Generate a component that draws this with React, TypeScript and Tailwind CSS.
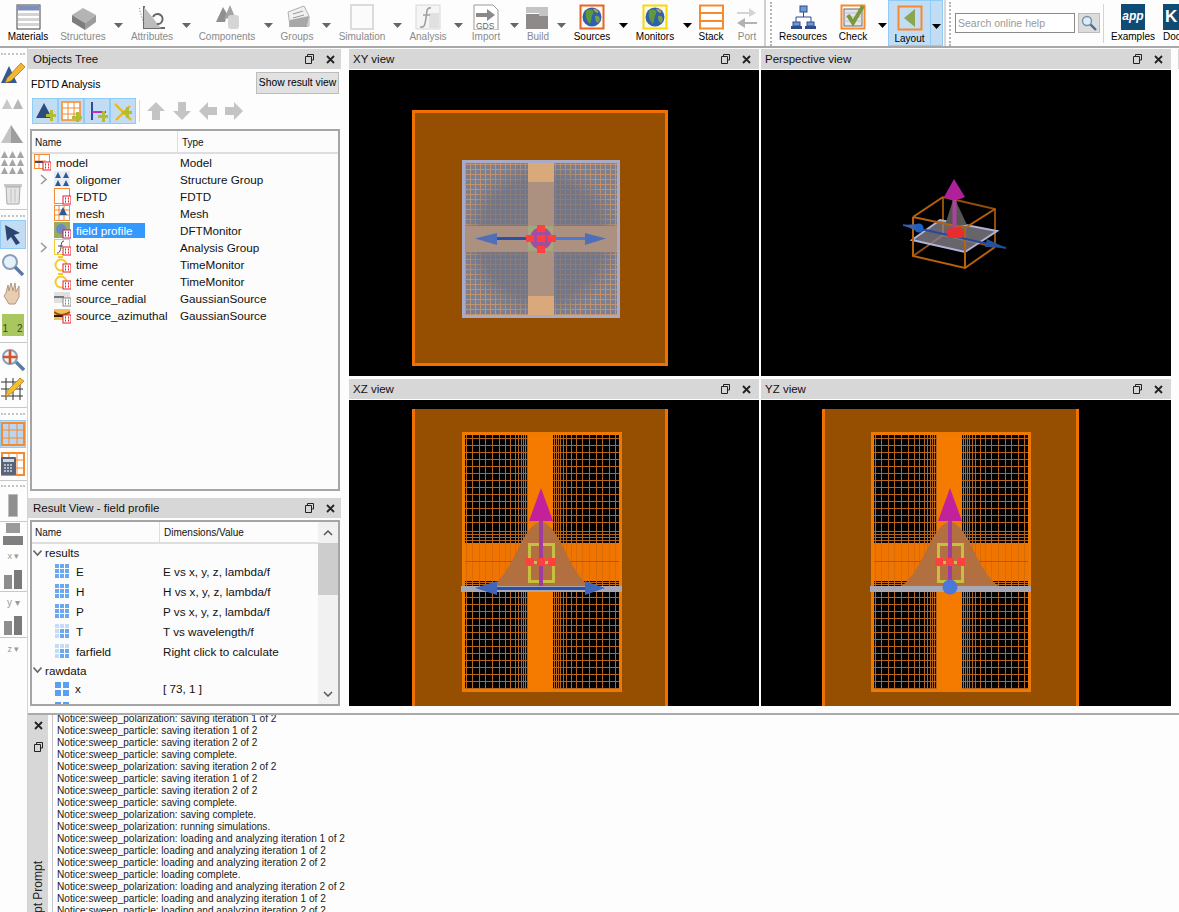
import React from "react";

function Ic({ children, w = 26, h = 26, vb }: { children: React.ReactNode; w?: number; h?: number; vb?: string }) {
  return (
    <svg width={w} height={h} viewBox={vb ?? `0 0 ${w} ${h}`} className="block shrink-0" shapeRendering="auto">
      {children}
    </svg>
  );
}

const Materials = () => (
  <Ic>
    <rect x="2" y="1" width="23" height="24" fill="#fff" stroke="#444" />
    <rect x="2.5" y="1.5" width="22" height="5" fill="#7e8fc0" />
    {[9, 14, 19].map((y) => (
      <rect key={y} x="3" y={y} width="21" height="3" fill="#d4d4d4" />
    ))}
  </Ic>
);
const Structures = () => (
  <Ic>
    <path d="M2 11 L13 4 L26 11 L15 19 Z" fill="#b4b4b4" />
    <path d="M2 11 L15 19 V26 L2 18 Z" fill="#7d7d7d" />
    <path d="M15 19 L26 11 V18 L15 26 Z" fill="#9c9c9c" />
  </Ic>
);
const Attributes = () => (
  <Ic>
    <path d="M5 2 V24 H26" stroke="#6b6b6b" strokeWidth="2" fill="none" />
    <path d="M5 3 L22 24 H5 Z" fill="#bdbdbd" />
    <path d="M0 4 L5 20" stroke="#666" strokeDasharray="1 2" />
    <path d="M14 13 a5 5 0 1 1 4 7" stroke="#666" strokeWidth="2" fill="none" />
  </Ic>
);
const Components = () => (
  <Ic>
    <path d="M2 18 L9 3 L13 10 L11 18 Z" fill="#8f8f8f" />
    <path d="M10 15 L16 1 L21 13 Z" fill="#a3a3a3" />
    <rect x="14" y="11" width="11" height="14" rx="3" fill="#d5d5d5" />
  </Ic>
);
const Groups = () => (
  <Ic>
    <path d="M4 8 L20 2 L25 12 V22 H6 Z" fill="#f0f0f0" stroke="#b0b0b0" />
    <path d="M6 16 L25 12 L23 23 H5 Z" fill="#a8a8a8" />
    <path d="M9 10 L19 7 M9 14 L20 11" stroke="#999" />
  </Ic>
);
const Simulation = () => (
  <Ic>
    <rect x="2" y="1" width="22" height="24" fill="#fbfbfb" stroke="#dcdcdc" strokeWidth="2" />
  </Ic>
);
const Analysis = () => (
  <Ic>
    <rect x="1" y="1" width="24" height="24" fill="#f5f5f5" stroke="#d8d8d8" />
    <rect x="14" y="9" width="10" height="15" fill="#e0e0e0" />
    <path d="M16 4 C11 3 12 9 11 14 C10 20 10 24 5 23 M8 11 H15" stroke="#a0a0a0" strokeWidth="1.6" fill="none" />
  </Ic>
);
const ImportI = () => (
  <Ic>
    <path d="M1 1 H20 L25 6 V26 H1 Z" fill="#fff" stroke="#999" />
    <path d="M3 9 H14 V5 L22 11 L14 17 V13 H3 Z" fill="#8a8a8a" />
    <text x="3" y="25" fontSize="8.5" fill="#666" fontFamily="Liberation Sans">GDS</text>
  </Ic>
);
const Build = () => (
  <Ic>
    <rect x="1" y="3" width="22" height="6" fill="#c4c4c4" />
    <rect x="1" y="10" width="22" height="15" fill="#8f8a8a" />
    <rect x="14" y="9" width="9" height="3" fill="#c4c4c4" />
  </Ic>
);
const Earth = ({ frame }: { frame: string }) => (
  <Ic>
    <rect x="1.5" y="1.5" width="23" height="23" fill="#fbf8e8" stroke={frame} strokeWidth="2" />
    <circle cx="13" cy="13" r="9.5" fill="#2f5fae" />
    <path d="M7 7 C11 4 16 6 14 10 C12 12 13 15 11 20 C8 17 6 13 7 7 Z" fill="#5f9a3a" />
    <path d="M16 12 C20 11 22 14 20 18 C18 20 16 17 16 12 Z" fill="#76a046" />
    <path d="M14 5 C17 4 20 7 19 9 C17 9 15 7 14 5 Z" fill="#b59a55" />
  </Ic>
);
const Stack = () => (
  <Ic>
    <rect x="2" y="1.5" width="23" height="23" fill="#fff" stroke="#f58a2e" strokeWidth="2" />
    <path d="M2 9 H25 M2 17 H25" stroke="#f58a2e" strokeWidth="2" />
  </Ic>
);
const Port = () => (
  <Ic>
    <path d="M3 8 H15 V4 L22 9 L15 13 V10 H3 Z" fill="#d4d4d4" />
    <path d="M23 18 H11 V14 L3 19 L11 24 V20 H23 Z" fill="#b3b3b3" />
  </Ic>
);
const Resources = () => (
  <Ic>
    <rect x="10" y="2" width="7" height="6" fill="#6d9ad4" stroke="#2e4b8e" />
    <path d="M13.5 8 V13 M6 18 V13 H21 V18" stroke="#2e4b8e" fill="none" />
    <rect x="3" y="18" width="7" height="4" fill="#6d9ad4" stroke="#2e4b8e" />
    <rect x="17" y="18" width="7" height="4" fill="#6d9ad4" stroke="#2e4b8e" />
    <rect x="1" y="22" width="11" height="3" fill="#2e4b8e" />
    <rect x="15" y="22" width="11" height="3" fill="#2e4b8e" />
  </Ic>
);
const Check = () => (
  <Ic>
    <rect x="1.5" y="1.5" width="23" height="23" fill="#fff" stroke="#f58a2e" strokeWidth="2" />
    <rect x="4" y="5" width="18" height="17" fill="#e4e4ee" stroke="#666" />
    <path d="M4 9 H22 M4 13 H22 M4 17 H22" stroke="#c0c0c8" />
    <path d="M8 11 L13 19 L23 2" stroke="#7a9a3a" strokeWidth="4" fill="none" />
  </Ic>
);
const Layout = () => (
  <Ic>
    <rect x="1.5" y="1.5" width="23" height="23" fill="#c2dcf3" stroke="#f58a2e" strokeWidth="2" />
    <path d="M18 4 V22 L7 13 Z" fill="#8aa650" />
  </Ic>
);

type Tool = { label: string; icon: React.ReactNode; on?: boolean; w: string; arrow?: string };
const tools: Tool[] = [
  { label: "Materials", icon: <Materials />, on: true, w: "w-[56px]" },
  { label: "Structures", icon: <Structures />, w: "w-[54px]", arrow: "w-[16px]" },
  { label: "Attributes", icon: <Attributes />, w: "w-[52px]", arrow: "w-[16px]" },
  { label: "Components", icon: <Components />, w: "w-[66px]", arrow: "w-[16px]" },
  { label: "Groups", icon: <Groups />, w: "w-[42px]", arrow: "w-[16px]" },
  { label: "Simulation", icon: <Simulation />, w: "w-[56px]", arrow: "w-[14px]" },
  { label: "Analysis", icon: <Analysis />, w: "w-[48px]", arrow: "w-[12px]" },
  { label: "Import", icon: <ImportI />, w: "w-[44px]", arrow: "w-[12px]" },
  { label: "Build", icon: <Build />, w: "w-[36px]", arrow: "w-[10px]" },
  { label: "Sources", icon: <Earth frame="#e8622a" />, on: true, w: "w-[52px]", arrow: "w-[10px]" },
  { label: "Monitors", icon: <Earth frame="#f5d90a" />, on: true, w: "w-[54px]", arrow: "w-[10px]" },
  { label: "Stack", icon: <Stack />, on: true, w: "w-[38px]" },
  { label: "Port", icon: <Port />, w: "w-[34px]" },
];

const Arrow = ({ on }: { on?: boolean }) => (
  <svg width="9" height="5" viewBox="0 0 9 5" className="block">
    <path d="M0 0 H9 L4.5 5 Z" fill={on ? "#000" : "#666"} />
  </svg>
);

function ToolBtn({ t }: { t: Tool }) {
  return (
    <>
      <div className={`${t.w} shrink-0 flex flex-col items-center pt-[4px]`}>
        {t.icon}
        <span className={`mt-[1px] text-[10px] leading-[12px] whitespace-nowrap ${t.on ? "text-black" : "text-[#8a8a8a]"}`}>{t.label}</span>
      </div>
      {t.arrow && (
        <div className={`${t.arrow} shrink-0 flex justify-center pt-[23px]`}>
          <Arrow on={t.on} />
        </div>
      )}
    </>
  );
}

const Dots = ({ v }: { v?: boolean }) =>
  v ? (
    <div className="w-0 h-[44px] border-l-2 border-dotted border-[#b5b5b5] mt-[2px] shrink-0" />
  ) : (
    <div className="w-[24px] h-0 border-t-2 border-dotted border-[#c4c4c4] ml-[1px] shrink-0" />
  );

function Toolbar() {
  return (
    <div className="h-[48px] shrink-0 flex bg-[#fdfdfd] border-b-2 border-[#a8a8a8] overflow-hidden">
      {tools.map((t) => (
        <ToolBtn key={t.label} t={t} />
      ))}
      <div className="w-[2px] h-[46px] bg-[#d0d0d0] shrink-0" />
      <div className="ml-[4px] mr-[4px] flex"><Dots v /></div>
      <ToolBtn t={{ label: "Resources", icon: <Resources />, on: true, w: "w-[54px]" }} />
      <ToolBtn t={{ label: "Check", icon: <Check />, on: true, w: "w-[46px]", arrow: "w-[12px]" }} />
      <div className="flex h-[46px] w-[55px] shrink-0 bg-[#c2dcf3] border border-[#8fcdf7]">
        <div className="w-[42px] flex flex-col items-center pt-[4px] border-r border-[#8fcdf7]">
          <Layout />
          <span className="mt-[2px] text-[10px] leading-[12px] text-black">Layout</span>
        </div>
        <div className="flex-1 flex justify-center pt-[23px]"><Arrow on /></div>
      </div>
      <div className="w-[2px] h-[46px] bg-[#d8d8d8] ml-[1px] shrink-0" />
      <div className="ml-[3px] flex"><Dots v /></div>
      <div className="ml-[4px] mt-[13px] w-[120px] h-[20px] border border-[#8a8a8a] bg-white text-[10.5px] leading-[18px] pl-[2px] text-[#9a9a9a] shrink-0">Search online help</div>
      <div className="ml-[3px] mt-[13px] w-[22px] h-[20px] bg-[#dcdcdc] border border-[#bdbdbd] flex items-center justify-center shrink-0">
        <svg width="16" height="16" viewBox="0 0 16 16">
          <circle cx="6" cy="6" r="4.5" fill="#dcecf8" stroke="#7890a8" strokeWidth="1.4" />
          <path d="M9.5 9.5 L15 15" stroke="#4a6a9a" strokeWidth="2.4" />
        </svg>
      </div>
      <div className="ml-[3px] mt-[4px] w-[1px] h-[39px] bg-[#d4d4d4] shrink-0" />
      <div className="w-[58px] shrink-0 flex flex-col items-center pt-[4px]">
        <div className="w-[24px] h-[26px] bg-[#0f4c75] text-white italic font-bold text-[12px] leading-[24px] text-center">app</div>
        <span className="mt-[1px] text-[10px] leading-[12px] text-black">Examples</span>
      </div>
      <div className="shrink-0 flex flex-col items-start pt-[4px] pl-[1px]">
        <div className="w-[24px] h-[26px] bg-[#0f4c75] text-white font-bold text-[17px] leading-[26px] pl-[2px]">K</div>
        <span className="mt-[1px] text-[10px] leading-[12px] text-black">Doc</span>
      </div>
    </div>
  );
}

/* ---------- left tool column ---------- */
const Sep = () => <div className="h-[1px] w-[27px] bg-[#c8c8c8] shrink-0" />;
const Box = ({ h, sel, children }: { h: string; sel?: boolean; children: React.ReactNode }) => (
  <div className={`${h} shrink-0 flex items-center justify-center ${sel ? "w-[26px] bg-[#c2dcf3] border border-[#8fcdf7]" : "w-[25px]"}`}>{children}</div>
);
const Tri = ({ x, y, s, f }: { x: number; y: number; s: number; f: string }) => <path d={`M${x} ${y + s} L${x + s / 2} ${y} L${x + s} ${y + s} Z`} fill={f} />;
const Sp = ({ h }: { h: string }) => <div className={`${h} shrink-0`} />;

function LeftTools() {
  return (
    <div className="w-[28px] shrink-0 flex flex-col items-start overflow-hidden pt-[5px] bg-[#fdfdfd] border-r border-[#d4d4d4]">
      <Dots />
      <Sp h="h-[3px]" />
      <Box h="h-[28px]">
        <Ic w={24} h={24}>
          <path d="M0 23 L8 6 L16 23 Z" fill="#2e5a96" />
          <path d="M6 18 L20 3 L24 7 L10 21 L4 23 Z" fill="#f2b632" stroke="#a06a10" strokeWidth="0.7" />
        </Ic>
      </Box>
      <Sp h="h-[5px]" />
      <Box h="h-[24px]">
        <Ic w={22} h={12}><Tri x={0} y={2} s={10} f="#c8c8c8" /><Tri x={11} y={2} s={10} f="#b8b8b8" /></Ic>
      </Box>
      <Sp h="h-[4px]" />
      <Box h="h-[28px]">
        <Ic w={24} h={22}><path d="M0 21 L10 3 L16 14 L22 21 Z" fill="#c4c4c4" /><path d="M10 3 L22 21 H10 Z" fill="#9e9e9e" /></Ic>
      </Box>
      <Box h="h-[32px]">
        <Ic w={24} h={24}>
          {[0, 8, 16].flatMap((y) => [0, 8, 16].map((x) => <Tri key={`${x}${y}`} x={x} y={y} s={7} f="#a5a5a5" />))}
        </Ic>
      </Box>
      <Sp h="h-[1px]" />
      <Box h="h-[26px]">
        <Ic w={20} h={24}>
          <rect x="1" y="3" width="18" height="3" fill="#c8c8c8" />
          <path d="M3 6 H17 L16 23 H4 Z" fill="#e4e4e4" stroke="#aaa" />
          <path d="M8 8 V21 M12 8 V21" stroke="#c0c0c0" />
        </Ic>
      </Box>
      <Sp h="h-[3px]" />
      <Sep />
      <Sp h="h-[5px]" />
      <Dots />
      <Sp h="h-[3px]" />
      <Box h="h-[29px]" sel>
        <Ic w={20} h={22}><path d="M2 1 L17 9 L11 11 L17 19 L13 21 L8 13 L4 17 Z" fill="#2c4470" /></Ic>
      </Box>
      <Sp h="h-[1px]" />
      <Box h="h-[29px]">
        <Ic w={24} h={24}>
          <circle cx="9" cy="9" r="7" fill="#e4f0fa" stroke="#8aa0b8" strokeWidth="2" />
          <path d="M14 14 L22 22" stroke="#5a7aa0" strokeWidth="3.4" />
        </Ic>
      </Box>
      <Box h="h-[28px]">
        <Ic w={20} h={24}>
          <path d="M3 12 L5 4 L6 10 L8 2 L10 10 L12 2 L13 11 L16 5 L16 16 L12 23 H6 L1 15 Z" fill="#e8cdb0" stroke="#b09880" />
        </Ic>
      </Box>
      <Sp h="h-[1px]" />
      <Box h="h-[34px]">
        <div className="w-[22px] h-[22px] bg-[#a9c75e] text-[#2f4a2a] text-[10px] leading-[12px] pt-[9px] flex justify-between px-[1px]">
          <span>1</span><span>2</span>
        </div>
      </Box>
      <Sep />
      <Box h="h-[33px]">
        <Ic w={24} h={24}>
          <circle cx="9" cy="9" r="7" fill="#eef2f6" stroke="#8aa0b8" strokeWidth="2" />
          <path d="M15 14 L23 22" stroke="#5a7aa0" strokeWidth="3.4" />
          <path d="M9 2 V16 M2 9 H16" stroke="#d2552a" strokeWidth="2.6" />
        </Ic>
      </Box>
      <Box h="h-[24px]">
        <Ic w={24} h={24}>
          <path d="M0 6 H22 M0 13 H22 M0 20 H22 M5 2 V24 M12 2 V24 M19 2 V24" stroke="#333" />
          <path d="M4 21 L7 14 L19 2 L23 5 L11 17 Z" fill="#f2bd2e" stroke="#a07010" strokeWidth="0.6" />
        </Ic>
      </Box>
      <Sp h="h-[7px]" />
      <Sep />
      <Sp h="h-[5px]" />
      <Dots />
      <Sp h="h-[5px]" />
      <Box h="h-[28px]" sel>
        <Ic w={24} h={24}>
          <rect x="1" y="1" width="22" height="22" fill="#bcd6ef" stroke="#f58a2e" strokeWidth="2" />
          <path d="M8 1 V23 M16 1 V23 M1 8 H23 M1 16 H23" stroke="#f58a2e" />
        </Ic>
      </Box>
      <Sp h="h-[2px]" />
      <Box h="h-[27px]">
        <Ic w={24} h={24}>
          <rect x="1" y="1" width="22" height="22" fill="#fff" stroke="#f58a2e" strokeWidth="2" />
          <path d="M8 1 V23 M16 1 V23 M1 8 H23 M1 16 H23" stroke="#f58a2e" />
          <rect x="0" y="5" width="15" height="18" rx="1" fill="#5a6478" />
          <rect x="2" y="7" width="11" height="3" fill="#d0d8e4" />
          <path d="M3 13 H12 M3 16 H12 M3 19 H12" stroke="#d0d8e4" strokeWidth="1.6" strokeDasharray="2 1" />
        </Ic>
      </Box>
      <Sp h="h-[3px]" />
      <Sep />
      <Sp h="h-[4px]" />
      <Dots />
      <Sp h="h-[6px]" />
      <Box h="h-[24px]"><div className="w-[10px] h-[23px] bg-[#8f8f8f] border border-[#bdbdbd]" /></Box>
      <Sp h="h-[4px]" />
      <Sep />
      <Box h="h-[24px]">
        <div className="flex flex-col gap-[3px] w-[20px]">
          <div className="h-[10px] w-[14px] mx-auto bg-[#9a9a9a]" />
          <div className="h-[9px] w-[20px] bg-[#7f7f7f]" />
        </div>
      </Box>
      <div className="h-[20px] w-[27px] text-[9px] leading-[20px] text-[#999] text-center shrink-0">x ▾</div>
      <Sp h="h-[2px]" />
      <Box h="h-[22px]">
        <div className="flex items-end gap-[2px]"><div className="w-[8px] h-[14px] bg-[#8d8d8d]" /><div className="w-[8px] h-[19px] bg-[#7a7a7a]" /></div>
      </Box>
      <Sp h="h-[1px]" />
      <Sep />
      <div className="h-[22px] w-[27px] text-[10px] leading-[22px] text-[#999] text-center shrink-0">y ▾</div>
      <Box h="h-[23px]">
        <div className="flex items-end gap-[2px]"><div className="w-[8px] h-[14px] bg-[#8d8d8d]" /><div className="w-[8px] h-[19px] bg-[#7a7a7a]" /></div>
      </Box>
      <Sep />
      <div className="h-[22px] w-[27px] text-[9px] leading-[22px] text-[#999] text-center shrink-0">z ▾</div>
    </div>
  );
}

/* ---------- panels ---------- */
const WinBtns = () => (
  <div className="flex items-center gap-[12px] shrink-0">
    <svg width="9" height="10" viewBox="0 0 9 10">
      <path d="M2.5 2.5 V0.5 H8.5 V6 H6.5 M0.5 2.5 H6.5 V9.5 H0.5 Z" fill="none" stroke="#222" />
    </svg>
    <svg width="9" height="9" viewBox="0 0 9 9">
      <path d="M1 1 L8 8 M8 1 L1 8" stroke="#222" strokeWidth="1.8" />
    </svg>
  </div>
);
const TitleBar = ({ title, cls }: { title: string; cls?: string }) => (
  <div className={`h-[20px] shrink-0 bg-[#d7d7d7] flex items-center justify-between text-[11.5px] text-[#111] ${cls ?? ""}`}>
    <span className="pt-[2px]">{title}</span>
    <WinBtns />
  </div>
);

const Badge = ({ c = "#e0202c" }: { c?: string }) => (
  <g>
    <rect x="9" y="8" width="8" height="8" fill="#fff" stroke={c} />
    <path d="M11 10.5 H12 M14 10.5 H15 M11 13.5 H12 M14 13.5 H15" stroke={c} strokeWidth="2" />
  </g>
);
const tI = (c: React.ReactNode) => <Ic w={17} h={17}>{c}</Ic>;
const treeIcons: Record<string, React.ReactNode> = {
  model: tI(<><rect x="0.5" y="0.5" width="15" height="14" fill="#fff" stroke="#f58a2e" /><path d="M5 0 V15 M0 7 H12" stroke="#f58a2e" /><path d="M1 8 H9" stroke="#2e4b8e" strokeWidth="2" /><Badge /></>),
  oligomer: tI(<><rect width="16" height="16" fill="#e8ecf4" /><path d="M1 7 L4 1 L7 7 Z M9 7 L12 1 L15 7 Z M1 15 L4 9 L7 15 Z M9 15 L12 9 L15 15 Z" fill="#2e5a96" /></>),
  FDTD: tI(<><rect x="0.5" y="0.5" width="15" height="15" fill="#fff" stroke="#f58a2e" /><Badge /></>),
  mesh: tI(<><rect x="0.5" y="0.5" width="15" height="15" fill="#fff" stroke="#f58a2e" /><path d="M5 0 V16 M10 0 V16 M0 5 H16 M0 10 H16" stroke="#f58a2e" /><path d="M5 10 L9 2 L13 10 Z" fill="#2e5a96" /></>),
  "field profile": tI(<><rect width="16" height="16" fill="#9aaa60" /><circle cx="7" cy="7" r="5" fill="#6a8ac0" /><Badge c="#b02060" /></>),
  total: tI(<><rect x="0.5" y="0.5" width="15" height="15" fill="#fff" stroke="#f5cc30" /><path d="M10 2 C6 2 8 8 6 12 C5 14 4 14 3 14 M4 7 H9" stroke="#444" fill="none" /><Badge /></>),
  time: tI(<><circle cx="7" cy="9" r="5.5" fill="#fff" stroke="#f5c830" strokeWidth="2" /><path d="M4 1 H9" stroke="#f5c830" strokeWidth="2" /><Badge /></>),
  source_radial: tI(<><rect y="2" width="16" height="11" fill="#e0e0e0" /><path d="M0 7 H10" stroke="#777" strokeWidth="2" /><Badge c="#888" /></>),
  source_azimuthal: tI(<><rect y="2" width="16" height="11" fill="#f0c060" /><path d="M0 5 C5 9 10 9 16 5" stroke="#a05010" strokeWidth="2" fill="none" /><path d="M0 9 H9" stroke="#222" strokeWidth="2" /><Badge /></>),
};
treeIcons["time center"] = treeIcons.time;

const Chevron = ({ down, c = "#9a9a9a" }: { down?: boolean; c?: string }) => (
  <svg width="9" height="11" viewBox="0 0 9 11" className="block">
    <path d={down ? "M0.5 2.5 L4.5 7 L8.5 2.5" : "M2 1 L7 5.5 L2 10"} stroke={c} strokeWidth="1.6" fill="none" />
  </svg>
);

const rows: [string, string, boolean?][] = [
  ["oligomer", "Structure Group", true],
  ["FDTD", "FDTD"],
  ["mesh", "Mesh"],
  ["field profile", "DFTMonitor"],
  ["total", "Analysis Group", true],
  ["time", "TimeMonitor"],
  ["time center", "TimeMonitor"],
  ["source_radial", "GaussianSource"],
  ["source_azimuthal", "GaussianSource"],
];

function ObjectsTree() {
  return (
    <div className="flex flex-col h-[442px] shrink-0">
      <TitleBar title="Objects Tree" cls="pl-[5px] pr-[6px]" />
      <div className="flex items-start justify-between h-[26px] pl-[3px] pr-[2px] mt-[1px]">
        <span className="text-[10.5px] pt-[7px] text-black">FDTD Analysis</span>
        <div className="w-[83px] h-[22px] mt-[2px] bg-[#e1e1e1] border border-[#bdbdbd] text-[10.3px] leading-[20px] text-center text-black whitespace-nowrap">Show result view</div>
      </div>
      <div className="flex items-center h-[26px] pl-[4px] mt-[2px]">
        {[
          <g key="a"><path d="M2 18 L10 3 L18 18 Z" fill="#2e4b7e" /><path d="M13 9 h4 v-4 h3 v4 h3 v3 h-3 v4 h-3 v-4 h-4 Z" fill="#b4bc30" transform="translate(-1 5)" /></g>,
          <g key="b"><rect x="2" y="2" width="18" height="18" fill="#fff" stroke="#f58a2e" strokeWidth="1.5" /><path d="M8 2 V20 M14 2 V20 M2 8 H20 M2 14 H20" stroke="#f58a2e" /><path d="M13 9 h4 v-4 h3 v4 h3 v3 h-3 v4 h-3 v-4 h-4 Z" fill="#b4bc30" transform="translate(-1 7)" /></g>,
          <g key="c"><path d="M6 2 V20" stroke="#2e4b9e" strokeWidth="2" /><path d="M6 12 H20" stroke="#c030c0" strokeWidth="2" /><path d="M13 9 h4 v-4 h3 v4 h3 v3 h-3 v4 h-3 v-4 h-4 Z" fill="#b4bc30" transform="translate(-1 6)" /></g>,
          <g key="d"><path d="M3 4 L19 20 M4 20 L18 6" stroke="#e8b820" strokeWidth="2.4" /><path d="M13 9 h4 v-4 h3 v4 h3 v3 h-3 v4 h-3 v-4 h-4 Z" fill="#b4bc30" transform="translate(-3 2)" /></g>,
        ].map((ic, i) => (
          <div key={i} className="w-[26px] h-[26px] bg-[#c2dcf3] border border-[#8fcdf7] flex items-center justify-center">
            <Ic w={22} h={22}>{ic}</Ic>
          </div>
        ))}
        <div className="w-[1px] h-[22px] bg-[#d8d8d8] ml-[3px] mr-[6px]" />
        <div className="flex gap-[6px]">
          {["M10 1 L19 10 H14 V19 H6 V10 H1 Z", "M6 1 H14 V10 H19 L10 19 L1 10 H6 Z", "M1 10 L10 1 V6 H19 V14 H10 V19 Z", "M19 10 L10 1 V6 H1 V14 H10 V19 Z"].map((d) => (
            <Ic key={d} w={20} h={20}><path d={d} fill="#c4c4c4" /></Ic>
          ))}
        </div>
      </div>
      <div className="ml-[2px] mr-[1px] mt-[5px] flex-1 border-2 border-[#a5a5a5] bg-[#fcfcfc] text-[11.7px] text-[#111] overflow-hidden">
        <div className="h-[23px] flex border-b-2 border-[#dedede] text-[10px]">
          <div className="w-[146px] pl-[3px] h-full leading-[23px] border-r border-[#dedede]">Name</div>
          <div className="pl-[4px] leading-[23px]">Type</div>
        </div>
        <div className="h-[17px] flex items-center">
          <div className="w-[148px] flex items-center pl-[2px] shrink-0 gap-[5px]">{treeIcons.model}<span>model</span></div>
          <span>Model</span>
        </div>
        {rows.map(([n, t, exp]) => (
          <div key={n} className="h-[17px] flex items-center">
            <div className="w-[148px] flex items-center shrink-0 overflow-visible">
              <div className="w-[22px] pl-[7px] shrink-0">{exp && <Chevron />}</div>
              {treeIcons[n]}
              <span className={`ml-[2px] px-[3px] whitespace-nowrap ${n === "field profile" ? "bg-[#3399ff] text-white w-[72px] leading-[15px]" : ""}`}>{n}</span>
            </div>
            <span>{t}</span>
          </div>
        ))}
      </div>
    </div>
  );
}

const Dgrid = ({ c = "#6aa8f0", dim }: { c?: string; dim?: boolean }) => (
  <Ic w={15} h={15}>
    {[0, 5, 10].flatMap((y) =>
      [0, 5, 10].map((x) => <rect key={`${x}${y}`} x={x} y={y} width="4" height="4" fill={dim && (x === 0 || y === 0) ? "#c4dcf8" : c} />)
    )}
  </Ic>
);
const res: [string, string, boolean][] = [
  ["E", "E vs x, y, z, lambda/f", false],
  ["H", "H vs x, y, z, lambda/f", false],
  ["P", "P vs x, y, z, lambda/f", false],
  ["T", "T vs wavelength/f", true],
  ["farfield", "Right click to calculate", true],
];
const ResRow = ({ a, b, icon }: { a: string; b: string; icon: React.ReactNode }) => (
  <div className="h-[20px] flex items-center shrink-0">
    <div className="w-[131px] flex items-center pl-[23px] shrink-0">
      {icon}
      <span className="ml-[6px]">{a}</span>
    </div>
    <span>{b}</span>
  </div>
);
const Solid = () => (
  <Ic w={14} h={14}>
    <rect width="6" height="6" fill="#5aa0f0" /><rect x="8" width="6" height="6" fill="#5aa0f0" />
    <rect y="8" width="6" height="6" fill="#5aa0f0" /><rect x="8" y="8" width="6" height="6" fill="#5aa0f0" />
  </Ic>
);

function ResultView() {
  return (
    <div className="flex flex-col flex-1 mt-[7px] min-h-0">
      <TitleBar title="Result View - field profile" cls="pl-[5px] pr-[6px]" />
      <div className="ml-[2px] mr-[1px] mt-[2px] h-[188px] border-2 border-[#a5a5a5] bg-[#fcfcfc] flex text-[11.7px] text-[#111] overflow-hidden">
        <div className="flex-1 min-w-0 flex flex-col overflow-hidden">
          <div className="h-[22px] shrink-0 flex border-b-2 border-[#dedede] text-[10px]">
            <div className="w-[128px] pl-[3px] h-full leading-[22px] border-r border-[#dedede]">Name</div>
            <div className="pl-[4px] leading-[22px]">Dimensions/Value</div>
          </div>
          <div className="h-[18px] shrink-0 flex items-center pl-[1px] gap-[3px]"><Chevron down c="#666" /><span>results</span></div>
          {res.map(([a, b, d]) => (
            <ResRow key={a} a={a} b={b} icon={<Dgrid dim={d} />} />
          ))}
          <div className="h-[17px] shrink-0 flex items-center pl-[1px] gap-[3px]"><Chevron down c="#666" /><span>rawdata</span></div>
          <ResRow a="x" b="[ 73, 1 ]" icon={<Solid />} />
          <ResRow a="y" b="[ 73, 1 ]" icon={<Solid />} />
        </div>
        <div className="w-[20px] shrink-0 flex flex-col items-center bg-[#f1f1f1]">
          <div className="h-[21px] flex items-center justify-center">
            <svg width="10" height="6" viewBox="0 0 10 6"><path d="M1 5 L5 1 L9 5" stroke="#555" strokeWidth="1.5" fill="none" /></svg>
          </div>
          <div className="w-full h-[52px] bg-[#cdcdcd]" />
          <div className="flex-1" />
          <div className="h-[21px] flex items-center justify-center">
            <svg width="10" height="6" viewBox="0 0 10 6"><path d="M1 1 L5 5 L9 1" stroke="#555" strokeWidth="1.5" fill="none" /></svg>
          </div>
        </div>
      </div>
    </div>
  );
}

/* ---------- 3D views ---------- */
function meshOffsets(len: number) {
  const out: number[] = [];
  let p = 1;
  let step = 1.6;
  while (p < len) {
    out.push(Math.round(p));
    p += step;
    step = Math.min(step * 1.22, 6.6);
  }
  return Array.from(new Set(out));
}
const range = (a: number, b: number, s: number) => {
  const o: number[] = [];
  for (let v = a; v <= b; v += s) o.push(Math.round(v));
  return o;
};

function XYCanvas() {
  const L = 463, R = 619, T = 161, B = 317;
  const xs = range(L + 2, R, 5);
  const ys = range(T + 3, B, 5);
  return (
    <svg viewBox="349 70 410 306" className="block w-full h-full" shapeRendering="crispEdges">
      <defs>
        <radialGradient id="disc">
          <stop offset="0.75" stopColor="#6f7282" stopOpacity="0.68" />
          <stop offset="1" stopColor="#6f7282" stopOpacity="0" />
        </radialGradient>
      </defs>
      <rect x="349" y="70" width="410" height="306" fill="#000" />
      <rect x="413.500" y="111.500" width="253" height="253" fill="#964e00" stroke="#f07000" strokeWidth="3" />
      <rect x={L} y={T} width={R - L} height={B - T} fill="#7c7f90" />
      {xs.map((x) => <rect key={x} x={x} y={T} width="1" height={B - T} fill="#c09470" />)}
      {ys.map((y) => <rect key={y} x={L} y={y} width={R - L} height="1" fill="#c09470" />)}
      <circle cx="541" cy="239" r="80" fill="url(#disc)" shapeRendering="auto" />
      <rect x="528" y="163" width="26" height="152" fill="#ac9180" />
      <rect x="465" y="226" width="152" height="26" fill="#ac9180" />
      <rect x="528" y="163" width="26" height="19" fill="#d9a97c" />
      <rect x="528" y="296" width="26" height="19" fill="#d9a97c" />
      <rect x="463.500" y="161" width="155" height="155" fill="none" stroke="#a9aac8" strokeWidth="3" />
      <rect x="528" y="226" width="25" height="25" fill="#a6a67e" />
      <circle cx="541" cy="238.500" r="11" fill="#a04ea0" shapeRendering="auto" />
      <rect x="526" y="235" width="8" height="7" fill="#ff4040" />
      <rect x="537" y="235" width="8" height="7" fill="#ff4040" />
      <rect x="548" y="235" width="8" height="7" fill="#ff4040" />
      <rect x="537" y="225" width="8" height="7" fill="#ff4040" />
      <rect x="537" y="246" width="8" height="7" fill="#ff4040" />
      <rect x="497" y="237" width="29" height="3" fill="#2a50a8" />
      <rect x="556" y="237" width="29" height="3" fill="#5078d0" />
      <path d="M475 238.500 L497 233 V245 Z" fill="#4f70b8" shapeRendering="auto" />
      <path d="M606 238.500 L585 233 V245 Z" fill="#4f70b8" shapeRendering="auto" />
    </svg>
  );
}

function PerspCanvas() {
  const edge = "#b8600c";
  return (
    <svg viewBox="761 70 410 306" className="block w-full h-full">
      <rect x="761" y="70" width="410" height="306" fill="#000" />
      <g stroke={edge} strokeWidth="2" fill="none">
        <path d="M943 197 L995 209 L995 247 M943 197 V235 L913 256 M943 235 L995 247" opacity="0.8" />
      </g>
      <path d="M912 240 L940 220 L997 231 L965 252 Z" fill="#8a8690" fillOpacity="0.75" stroke="#b0b4d8" strokeWidth="2" />
      <path d="M954 197 L945 225 H967 Z" fill="#555" />
      <g stroke={edge} strokeWidth="2" fill="none">
        <path d="M913 217 L965 228 L995 209 M913 217 L943 197 M913 217 V256 L965 268 L995 247 M965 228 V268" />
      </g>
      <rect x="952.500" y="197" width="4" height="32" fill="#b040a0" />
      <path d="M954 179 L965 197 Q954 203 944 197 Z" fill="#b0209a" />
      <path d="M903 225 L1006 248" stroke="#2848a0" strokeWidth="2" />
      <path d="M903 225 L919 224 V232 Z" fill="#3a62b0" />
      <circle cx="919" cy="228" r="4.500" fill="#1c60c0" />
      <path d="M1006 248 L987 239 L985 247 Z" fill="#24509c" />
      <path d="M946 229 L961 227 L964 233 L962 238 L948 238 Z" fill="#e82c30" />
    </svg>
  );
}

function SideCanvas({ vb, ox, ow, ix, cx, blueDot }: { vb: string; ox: number; ow: number; ix: number; cx: number; blueDot?: boolean }) {
  const T = 433, B = 690, W = 157;
  const off = meshOffsets(65);
  const ys = [...range(T + 5, 528, 7), 531, 534, 537, 540, 582, 584, ...range(590, B, 7)];
  const bl = cx - 13, br = cx + 12;
  return (
    <svg viewBox={vb} className="block w-full h-full" shapeRendering="crispEdges">
      <rect x={ox - 70} y="400" width="500" height="306" fill="#000" />
      <rect x={ox} y="409" width={ow} height="297" fill="#964e00" />
      <rect x={ox} y="409" width="3" height="297" fill="#f07000" />
      <rect x={ox + ow - 3} y="409" width="3" height="297" fill="#f07000" />
      <rect x={ix} y={T} width={W} height={B - T} fill="#000" />
      {off.map((d) => <rect key={`a${d}`} x={bl - d} y={T} width="1" height={B - T} fill="#b5661c" />)}
      {off.map((d) => <rect key={`b${d}`} x={br + d} y={T} width="1" height={B - T} fill="#b5661c" />)}
      {ys.map((y) => <rect key={y} x={ix} y={y} width={W} height="1" fill="#b5661c" />)}
      <rect x={ix} y="543" width={W} height="38" fill="#ef7400" />
      {off.map((d) => <rect key={`c${d}`} x={bl - d} y="543" width="1" height="38" fill="#d86c08" />)}
      {off.map((d) => <rect key={`e${d}`} x={br + d} y="543" width="1" height="38" fill="#d86c08" />)}
      <rect x={ix} y="561" width={W} height="1" fill="#a85c14" />
      <rect x={bl} y={T} width="25" height={B - T} fill="#f57a00" />
      <rect x={ix} y={T} width={W} height={B - T} fill="none" stroke="#f07a00" strokeWidth="3" />
      <path d={`M${cx - 50} 587 C${cx - 38} 580 ${cx - 28} 560 ${cx - 20} 543 C${cx - 12} 528 ${cx - 6} 522 ${cx} 522 C${cx + 6} 522 ${cx + 12} 528 ${cx + 20} 543 C${cx + 28} 560 ${cx + 38} 580 ${cx + 50} 587 Z`} fill="#b27040" shapeRendering="auto" />
      <rect x={cx - 12} y="544" width="24" height="37" fill="none" stroke="#c8bf40" strokeWidth="3" />
      <rect x={cx - 2} y="521" width="4" height="65" fill="#a03ca0" />
      <path d={`M${cx} 488 L${cx + 12} 521 H${cx - 12} Z`} fill="#c3209c" shapeRendering="auto" />
      <rect x={cx - 12} y="561" width="24" height="3" fill="#c8bf40" />
      <rect x={cx - 15} y="558" width="8" height="8" fill="#ff4040" />
      <rect x={cx - 4} y="558" width="8" height="8" fill="#ff4040" />
      <rect x={cx + 7} y="558" width="8" height="8" fill="#ff4040" />
      <rect x={ix - 2} y="586" width={W + 4} height="6" fill="#a8a8b4" />
      {blueDot ? (
        <circle cx={cx} cy="587" r="7.500" fill="#4a78d8" shapeRendering="auto" />
      ) : (
        <>
          <rect x={cx - 44} y="587" width="88" height="3" fill="#2850a8" />
          <path d={`M${cx - 66} 588 L${cx - 44} 581 V595 Z`} fill="#3f66b8" shapeRendering="auto" />
          <path d={`M${cx + 64} 588 L${cx + 44} 581 V595 Z`} fill="#3f66b8" shapeRendering="auto" />
        </>
      )}
    </svg>
  );
}

function View({ title, children }: { title: string; children: React.ReactNode }) {
  return (
    <div className="w-[410px] h-full shrink-0 flex flex-col">
      <TitleBar title={title} cls="pl-[4px] pr-[8px]" />
      <div className="flex-1 min-h-0 mt-[1px] bg-black overflow-hidden">{children}</div>
    </div>
  );
}

/* ---------- console ---------- */
const log = [
  "Notice:sweep_polarization: saving iteration 1 of 2",
  "Notice:sweep_particle: saving iteration 1 of 2",
  "Notice:sweep_particle: saving iteration 2 of 2",
  "Notice:sweep_particle: saving complete.",
  "Notice:sweep_polarization: saving iteration 2 of 2",
  "Notice:sweep_particle: saving iteration 1 of 2",
  "Notice:sweep_particle: saving iteration 2 of 2",
  "Notice:sweep_particle: saving complete.",
  "Notice:sweep_polarization: saving complete.",
  "Notice:sweep_polarization: running simulations.",
  "Notice:sweep_polarization: loading and analyzing iteration 1 of 2",
  "Notice:sweep_particle: loading and analyzing iteration 1 of 2",
  "Notice:sweep_particle: loading and analyzing iteration 2 of 2",
  "Notice:sweep_particle: loading complete.",
  "Notice:sweep_polarization: loading and analyzing iteration 2 of 2",
  "Notice:sweep_particle: loading and analyzing iteration 1 of 2",
  "Notice:sweep_particle: loading and analyzing iteration 2 of 2",
];

function Console() {
  return (
    <div className="flex flex-1 min-h-0 mt-[7px] border-t-2 border-[#ababab] overflow-hidden">
      <div className="w-[20px] shrink-0 bg-[#d7d7d7] flex flex-col items-center overflow-hidden">
        <svg width="9" height="9" viewBox="0 0 9 9" className="mt-[6px] shrink-0"><path d="M1 1 L8 8 M8 1 L1 8" stroke="#222" strokeWidth="1.8" /></svg>
        <svg width="9" height="10" viewBox="0 0 9 10" className="mt-[12px] shrink-0"><path d="M2.5 2.5 V0.5 H8.5 V6 H6.5 M0.5 2.5 H6.5 V9.5 H0.5 Z" fill="none" stroke="#222" /></svg>
        <div className="mt-[109px] shrink-0 [writing-mode:vertical-rl] rotate-180 text-[12px] leading-[20px] text-[#222] whitespace-nowrap">Script Prompt</div>
      </div>
      <div className="ml-[4px] flex-1 border-l border-[#c4c4c4] bg-[#fdfdfd] overflow-hidden pl-[4px]">
        <div className="text-[10.1px] leading-[12px] text-[#222] -mt-[2px] whitespace-nowrap">
          {log.map((l, i) => (
            <div key={i}>{l}</div>
          ))}
        </div>
      </div>
    </div>
  );
}

export default function App() {
  return (
    <div className="w-[1179px] h-[912px] overflow-hidden flex flex-col bg-[#fdfdfd] font-['Liberation_Sans',Arial,sans-serif]">
      <Toolbar />
      <div className="flex flex-1 min-h-0">
        <LeftTools />
        <div className="flex-1 min-w-0 flex flex-col">
          <div className="h-[658px] shrink-0 flex pt-[1px]">
            <div className="w-[314px] shrink-0 flex flex-col pr-[1px]">
              <ObjectsTree />
              <ResultView />
            </div>
            <div className="w-[7px] shrink-0" />
            <div className="flex flex-col w-[830px] shrink-0">
              <div className="flex h-[327px] gap-[2px] shrink-0">
                <View title="XY view"><XYCanvas /></View>
                <View title="Perspective view"><PerspCanvas /></View>
                <div className="flex-1 h-[20px] ml-[5px] bg-[#d7d7d7]" />
              </div>
              <div className="flex flex-1 min-h-0 gap-[2px] mt-[3px]">
                <View title="XZ view">
                  <SideCanvas vb="349 400 410 306" ox={412} ow={256} ix={463} cx={541} />
                </View>
                <View title="YZ view">
                  <SideCanvas vb="761 400 410 306" ox={822} ow={257} ix={872} cx={950} blueDot />
                </View>
              </div>
            </div>
          </div>
          <Console />
        </div>
      </div>
    </div>
  );
}
